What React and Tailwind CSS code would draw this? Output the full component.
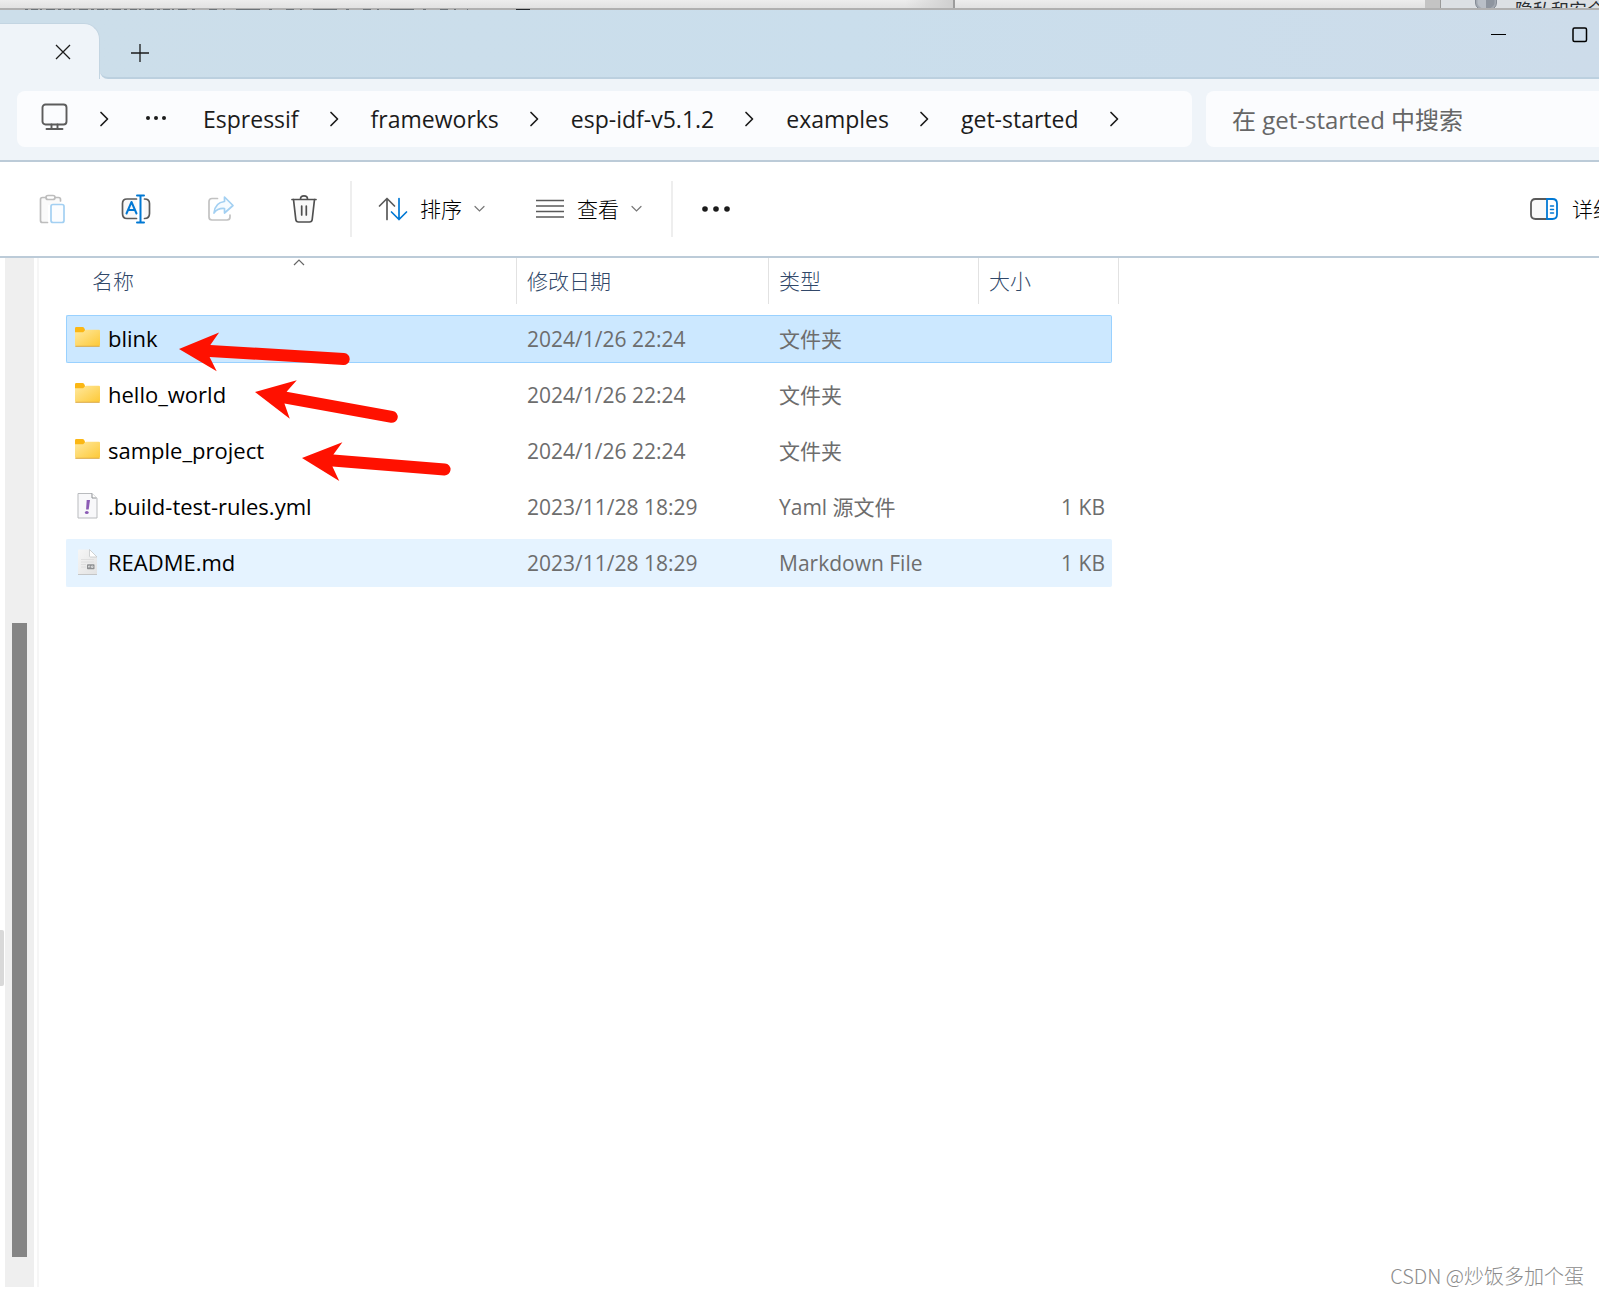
import React from "react";

const files = [
  { name: "blink", date: "2024/1/26 22:24", type: "文件夹", size: "", icon: "folder", state: "selected" },
  { name: "hello_world", date: "2024/1/26 22:24", type: "文件夹", size: "", icon: "folder" },
  { name: "sample_project", date: "2024/1/26 22:24", type: "文件夹", size: "", icon: "folder" },
  { name: ".build-test-rules.yml", date: "2023/11/28 18:29", type: "Yaml 源文件", size: "1 KB", icon: "yaml" },
  { name: "README.md", date: "2023/11/28 18:29", type: "Markdown File", size: "1 KB", icon: "md", state: "hover" },
];

const crumbs = ["Espressif", "frameworks", "esp-idf-v5.1.2", "examples", "get-started"];

const cellTone = {
  selected: "bg-[#cce8ff] border-[#99d1ff]",
  hover: "bg-[#e5f3ff] border-[#e5f3ff]",
  none: "border-transparent",
};

function Chevron() {
  return (
    <svg className="h-4 w-[72px] shrink-0" viewBox="0 0 72 16" fill="none" stroke="#1b1b1b" strokeWidth="1.7" aria-hidden="true">
      <path d="M32 1.5 38.5 8 32 14.5" strokeLinecap="round" strokeLinejoin="round" />
    </svg>
  );
}

function DownChevron() {
  return (
    <svg className="h-3 w-3 shrink-0" viewBox="0 0 12 12" fill="none" stroke="#777" strokeWidth="1.2" aria-hidden="true">
      <path d="M1 3.5 5.500 8l4.5-4.5" strokeLinecap="round" />
    </svg>
  );
}

function FileIcon({ kind }) {
  if (kind === "folder") {
    return (
      <svg className="h-[26px] w-[25px] shrink-0" viewBox="0 0 25 26" aria-hidden="true">
        <defs>
          <linearGradient id="folderFill" x1="0" y1="0" x2="1" y2="1">
            <stop offset="0" stopColor="#ffe9a0" />
            <stop offset="1" stopColor="#fdc937" />
          </linearGradient>
        </defs>
        <path d="M0 3.2Q0 2 1.2 2h6.3q.8 0 1.3.6L10 4.5V9H0Z" fill="#fbb714" />
        <path d="M0 7.200h7.500q.7 0 1.200-.5L10 5.200q.5-.5 1.200-.5H24q1 0 1 1V20q0 1-1 1H1q-1 0-1-1Z" fill="url(#folderFill)" />
        <path d="M.3 21.300h24.400" stroke="#dba73d" strokeWidth="1" />
      </svg>
    );
  }
  if (kind === "yaml") {
    return (
      <svg className="h-[26px] w-[25px] shrink-0" viewBox="0 0 25 26" aria-hidden="true">
        <path d="M3 .5h14l5 5V25H3Z" fill="#f8f8fa" stroke="#b9bbbe" />
        <path d="M17 .5v4.500h4.500" fill="#fff" stroke="#8d9093" />
        <path d="M11.700 7H15l-1.300 9.500h-2.600Z" fill="#8b5bb5" />
        <ellipse cx="11.800" cy="19.500" rx="1.900" ry="1.500" fill="#8b5bb5" />
      </svg>
    );
  }
  return (
    <svg className="h-[26px] w-[25px] shrink-0" viewBox="0 0 25 26" aria-hidden="true">
      <defs>
        <linearGradient id="mdFill" x1="0" y1="0" x2="1" y2="1">
          <stop offset="0" stopColor="#f6f6f6" />
          <stop offset="1" stopColor="#e2e2e2" />
        </linearGradient>
      </defs>
      <path d="M3 1.500q0-1 1-1H14.500L22 8v16.500q0 1-1 1H4q-1 0-1-1Z" fill="url(#mdFill)" />
      <path d="M14.500.5V7q0 1 1 1H22Z" fill="#fff" stroke="#c4c6c8" strokeWidth=".8" />
      <path d="M6 10.500h13M6 13h13M6 15.500h5M6 18h5" stroke="#dadada" strokeWidth=".8" />
      <path d="M3 25.500h19" stroke="#bbb" strokeWidth=".8" />
      <rect x="12" y="15.200" width="7.500" height="5" rx=".8" fill="#8d8f91" />
      <path d="M13.500 18.500v-1.500h1.300v1.500M16.500 17H18v1.500h-1.500Z" stroke="#eee" strokeWidth=".7" fill="none" />
    </svg>
  );
}

function ToolButton({ label, children, disabled }) {
  return (
    <button type="button" aria-label={label} disabled={disabled} className="flex h-14 w-[84px] shrink-0 items-center justify-center">
      <svg className="h-[30px] w-[30px]" viewBox="0 0 30 30" fill="none" strokeWidth="1.700" strokeLinecap="round" strokeLinejoin="round" aria-hidden="true">
        {children}
      </svg>
    </button>
  );
}

function RedArrow({ x1, y1, angle, length }) {
  return (
    <g transform={`translate(${x1} ${y1}) rotate(${angle})`}>
      <path d={`M0 0 39-19 31-6H${length - 6}a6 6 0 0 1 0 12H31L39 20Z`} fill="#ff1100" />
    </g>
  );
}

function TopStrip() {
  return (
    <div className="flex h-[10px] shrink-0 overflow-hidden border-b-2 border-[#b0b0b0] bg-linear-to-b from-[#ededed] to-[#e2e2e2]" aria-hidden="true">
      <div className="w-[955px] shrink-0 border-r-2 border-[#9c9c9c] bg-linear-to-r from-transparent from-95% to-[#cfcfcf]" />
      <div className="min-w-0 flex-1" />
      <div className="flex w-[174px] shrink-0 overflow-hidden">
        <div className="w-4 shrink-0 border-r border-[#999] bg-[#c4c4c4]" />
        <div className="flex min-w-0 flex-1 gap-[18px] bg-[#dce0e4] pl-[34px]">
          <svg className="h-5 w-[22px] shrink-0" viewBox="0 0 22 20">
            <path d="M.5-3h21V3q0 6-10.500 9Q.5 9 .5 3Z" fill="#a3a9b2" stroke="#858c96" />
            <path d="M11-3h8.500V3q0 4-8.500 7Z" fill="#8e959f" />
            <path d="M2.500-3H11v13Q2.500 7 2.500 3Z" fill="#b9bfc7" />
          </svg>
          <span className="whitespace-nowrap text-[18px] leading-5 text-[#2b2f33]">隐私和安全</span>
        </div>
      </div>
    </div>
  );
}

export default function App() {
  return (
    <div className="relative flex min-h-screen w-full flex-col overflow-hidden bg-white font-['Open_Sans','Noto_Sans_CJK_SC',sans-serif] text-[#1b1b1b]">
      <TopStrip />
      <svg className="pointer-events-none absolute left-0 top-[9px] h-px w-[540px]" viewBox="0 0 540 1" aria-hidden="true">
        <path d="M25 .5H190" stroke="#6d7378" strokeDasharray="3 3 7 2 2 4 9 3" />
        <path d="M192 .5H468" stroke="#6d7378" strokeDasharray="3 14 8 6 2 11 24 9" />
        <path d="M516 .5h14" stroke="#24282c" />
      </svg>

      <header className="flex h-[69px] shrink-0 bg-[#eff4f9]">
        <div className="flex w-[100px] shrink-0 items-end bg-[#ccdeea]">
          <div className="flex h-14 w-full items-center justify-end rounded-tr-[16px] border-r border-t border-[#c3d5e2] bg-[#eff4f9] pr-[28px]">
            <button type="button" aria-label="关闭标签页">
              <svg className="h-4 w-4" viewBox="0 0 16 16" stroke="#1b1b1b" strokeWidth="1.300" aria-hidden="true">
                <path d="m1 1 14 14M15 1 1 15" />
              </svg>
            </button>
          </div>
        </div>
        <div className="flex min-w-0 flex-1 justify-between rounded-bl-[8px] border-b-2 border-[#bcd0df] bg-linear-to-r from-[#ccdeea] via-[#cadeec] to-[#cddcea]">
          <button type="button" aria-label="新建标签页" className="flex w-20 items-center justify-center pt-[18px]">
            <svg className="h-[18px] w-[18px]" viewBox="0 0 18 18" stroke="#1b1b1b" strokeWidth="1.300" aria-hidden="true">
              <path d="M9 0v18M0 9h18" />
            </svg>
          </button>
          <div className="flex h-[49px]">
            <button type="button" aria-label="最小化" className="flex w-[81px] items-center justify-center">
              <span className="h-px w-[15px] bg-black" />
            </button>
            <button type="button" aria-label="最大化" className="flex w-[60px] items-center pl-[33px]">
              <svg className="h-4 w-4" viewBox="0 0 16 16" fill="none" stroke="#000" strokeWidth="1.500" aria-hidden="true">
                <rect x="1" y="1" width="13.500" height="13.500" rx="1.500" />
              </svg>
            </button>
          </div>
        </div>
      </header>

      <div className="flex h-[83px] shrink-0 gap-[14px] border-b-2 border-[#bccbd8] bg-[#eff4f9] pb-[13px] pl-[17px] pt-3">
        <nav aria-label="路径" className="flex w-[1175px] min-w-0 items-center rounded-lg bg-[#fbfcfe] pl-6 text-[23px] leading-8">
          <button type="button" aria-label="此电脑" className="pb-1">
            <svg className="h-7 w-7" viewBox="0 0 28 28" fill="none" stroke="#5c5c5c" strokeWidth="1.900" aria-hidden="true">
              <rect x="1.500" y="1.500" width="24" height="20" rx="3" />
              <path d="M10.500 21.500V26M16.500 21.500V26M5.500 26h16" strokeLinecap="round" />
            </svg>
          </button>
          <Chevron />
          <button type="button" aria-label="更多路径" className="-ml-3 flex w-[74px] shrink-0 pb-1">
            <svg className="ml-4 h-5 w-[22px]" viewBox="0 0 22 20" fill="#1b1b1b" aria-hidden="true">
              <circle cx="3" cy="11" r="2" /><circle cx="11" cy="11" r="2" /><circle cx="19" cy="11" r="2" />
            </svg>
          </button>
          <ol className="flex items-center">
            {crumbs.map((c) => (
              <li key={c} className="flex items-center whitespace-nowrap">
                <a href="#">{c}</a>
                <Chevron />
              </li>
            ))}
          </ol>
        </nav>
        <input
          type="text"
          aria-label="搜索"
          placeholder="在 get-started 中搜索"
          className="min-w-0 flex-1 rounded-l-lg bg-[#fbfcfe] pl-[26px] pt-[2px] text-[24px] outline-none placeholder:text-[#666]"
        />
      </div>

      <div className="flex h-[96px] shrink-0 items-center overflow-hidden border-b-2 border-[#bccbd8] pl-[10px] text-[21px] leading-7">
        <ToolButton label="粘贴" disabled>
          <path d="M8 3.500H5.500Q3 3.500 3 6v20q0 2.500 2.500 2.500H11V11h12V6q0-2.500-2.500-2.500H18" fill="#fafafa" stroke="none" />
          <path d="M8.500 3.500H5.500Q3.500 3.500 3.500 5.500v21q0 2 2 2h5M18.500 3.500h3q2 0 2 2V7" stroke="#bdbdbd" />
          <rect x="9" y="1.500" width="9" height="4" rx="2" stroke="#bdbdbd" fill="#fff" />
          <rect x="14" y="10.500" width="13" height="18" rx="2" stroke="#a3d0f2" fill="#fbfdff" />
        </ToolButton>
        <ToolButton label="重命名">
          <path d="M15.500 5H6Q1.500 5 1.500 9.500v10Q1.500 24.500 6 24.500h9.500M23.500 5q5 0 5 4.500v10q0 5-5 5" stroke="#5a5a5a" fill="#f8f8f8" />
          <path d="m5.500 19.500 5-11.500 5 11.500M7.200 16h6.600" stroke="#0078d4" strokeWidth="2" />
          <path d="M19.500 1.500v27M16 1.500h7M16 28.500h7" stroke="#0078d4" strokeWidth="2" />
        </ToolButton>
        <ToolButton label="共享" disabled>
          <path d="M12.500 4.500H7Q4 4.500 4 7.500v15.500q0 3 3 3h15q3 0 3-3v-2" stroke="#c2c2c2" />
          <path d="M19.500 3 28 11.500 19.500 19v-4.500q-7-.5-10.500 4.500 1-10.500 10.500-11.500Z" stroke="#a3d0f2" fill="#f6fbff" />
        </ToolButton>
        <ToolButton label="删除">
          <path d="m4.500 5.500 2.300 20q.3 2.500 2.700 2.500h11q2.400 0 2.700-2.500l2.300-20" stroke="#505050" fill="#f9f9f9" />
          <path d="M3 5.500h24M11.500 5q0-3.200 3.500-3.200T18.500 5M12.700 12v9M17.300 12v9" stroke="#505050" />
        </ToolButton>
        <span className="ml-1 h-14 w-[2px] shrink-0 bg-[#eee]" />
        <button type="button" className="ml-[26px] flex shrink-0 items-center">
          <svg className="h-6 w-[30px]" viewBox="0 0 30 24" fill="none" strokeWidth="1.700" strokeLinecap="round" strokeLinejoin="round" aria-hidden="true">
            <path d="M9 22.500V1.500M1.500 9 9 1.500 16.500 9" stroke="#5a5a5a" />
            <path d="M21 1.500v21M13.500 15l7.500 7.500 7.500-7.500" stroke="#0078d4" />
          </svg>
          <span className="ml-3 mr-3 font-light text-black">排序</span>
          <DownChevron />
        </button>
        <button type="button" className="ml-[50px] flex shrink-0 items-center">
          <svg className="h-5 w-[29px]" viewBox="0 0 29 20" stroke="#5a5a5a" strokeWidth="1.600" aria-hidden="true">
            <path d="M0 1.500h28M0 7h28M0 12.500h28M0 18h28" />
          </svg>
          <span className="ml-3 mr-3 font-light text-black">查看</span>
          <DownChevron />
        </button>
        <span className="ml-[28px] h-14 w-[2px] shrink-0 bg-[#eee]" />
        <button type="button" aria-label="更多" className="ml-7 shrink-0">
          <svg className="h-5 w-[30px]" viewBox="0 0 30 20" fill="#1b1b1b" aria-hidden="true">
            <circle cx="4" cy="10" r="2.800" /><circle cx="15" cy="10" r="2.800" /><circle cx="26" cy="10" r="2.800" />
          </svg>
        </button>
        <button type="button" className="ml-auto flex w-[69px] shrink-0 items-center gap-[14px] whitespace-nowrap">
          <svg className="h-[22px] w-[28px] shrink-0" viewBox="0 0 28 22" fill="none" strokeWidth="1.800" strokeLinecap="round" aria-hidden="true">
            <path d="M17 1H5.500Q1 1 1 5.500v11Q1 21 5.500 21H17" stroke="#5a5a5a" fill="#f8f8f8" />
            <path d="M17 1h5.500Q27 1 27 5.500v11Q27 21 22.500 21H17Z" stroke="#0078d4" fill="#fff" />
            <path d="M20.500 8h3M20.500 11.500h3M20.500 15h3" stroke="#0078d4" strokeWidth="1.500" />
          </svg>
          <span className="font-light text-black">详细信息</span>
        </button>
      </div>

      <main className="flex min-h-0 flex-1 pb-[9px]">
        <div className="flex w-[5px] shrink-0 flex-col justify-end pb-[301px]">
          <div className="h-14 w-1 rounded-r-[2px] bg-[#d9d9d9]" />
        </div>
        <div className="flex w-[29px] shrink-0 flex-col items-center bg-[#efefef] pb-[30px] pt-[365px]">
          <div className="w-[15px] flex-1 bg-[#858585]" />
        </div>
        <div className="ml-[3px] w-[2px] shrink-0 bg-[#f6f6f6]" />

        <div className="relative ml-[27px] self-start">
          <table className="w-[1053px] table-fixed border-separate border-spacing-0 text-[21px] leading-7">
            <colgroup>
              <col className="w-[450px]" />
              <col className="w-[252px]" />
              <col className="w-[210px]" />
              <col className="w-[134px]" />
              <col className="w-[7px]" />
            </colgroup>
            <thead>
              <tr className="h-[53px] text-left align-top text-[#314869]">
                <th scope="col" className="p-0 font-light">
                  <div className="relative flex h-[46px] items-center pl-[26px]">
                    名称
                    <svg className="absolute left-[227px] top-0 h-2 w-3" viewBox="0 0 12 8" fill="none" stroke="#666" strokeWidth="1.200" aria-hidden="true">
                      <path d="M1 7 6 2l5 5" />
                    </svg>
                  </div>
                </th>
                {["修改日期", "类型", "大小"].map((h) => (
                  <th key={h} scope="col" className="p-0 font-light">
                    <div className="flex h-[46px] items-center border-l border-[#e2e2e2] pl-[10px]">{h}</div>
                  </th>
                ))}
                <td className="p-0">
                  <div className="h-[46px] border-r border-[#e2e2e2]" />
                </td>
              </tr>
            </thead>
            <tbody>
              {files.map((f) => {
                const tone = cellTone[f.state || "none"];
                return (
                  <tr key={f.name} className="h-14 text-[#6d6d6d]">
                    <td className="p-0">
                      <div className={`flex h-12 items-center gap-2 rounded-l-[2px] border-y border-l pb-[2px] pl-2 text-[22px] text-black ${tone}`}>
                        <FileIcon kind={f.icon} />
                        <span>{f.name}</span>
                      </div>
                    </td>
                    <td className="p-0">
                      <div className={`flex h-12 items-center border-y pl-[11px] ${tone}`}>{f.date}</div>
                    </td>
                    <td className="p-0">
                      <div className={`flex h-12 items-center border-y pl-[11px] ${tone}`}>{f.type}</div>
                    </td>
                    <td className="p-0">
                      <div className={`flex h-12 items-center justify-end rounded-r-[2px] border-y border-r pr-[6px] ${tone}`}>{f.size}</div>
                    </td>
                  </tr>
                );
              })}
            </tbody>
          </table>

          <svg className="pointer-events-none absolute left-0 top-0 h-[240px] w-[420px]" viewBox="66 258 420 240" aria-hidden="true">
            <RedArrow x1={179} y1={349} angle={3.5} length={171} />
            <RedArrow x1={255} y1={392} angle={10.3} length={145} />
            <RedArrow x1={302} y1={458} angle={4.6} length={149} />
          </svg>
        </div>
      </main>

      <div className="absolute bottom-[6px] right-[15px] font-['Noto_Sans_CJK_SC',sans-serif] text-[20px] font-light leading-7 text-[#8c8c8c]">
        CSDN @炒饭多加个蛋
      </div>
    </div>
  );
}
